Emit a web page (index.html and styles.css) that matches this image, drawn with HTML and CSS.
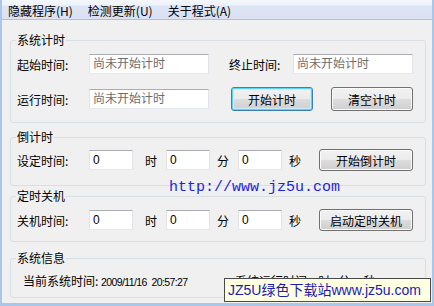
FILE: index.html
```html
<html lang="zh-CN">
<head>
    <meta charset="UTF-8">
    <title>计时器</title>
    <link rel="stylesheet" href="styles.css">
</head>
<body>
    <div class="window">
        <div class="menubar">
            <span class="menu-item">隐藏程序(H)</span><span class="menu-item">检测更新(U)</span><span class="menu-item">关于程式(A)</span>
        </div>

        <fieldset class="group g-clock">
            <legend>系统计时</legend>
            <div class="row">
                <span class="lbl">起始时间:</span>
                <input class="field wide" placeholder="尚未开始计时">
                <span class="lbl lbl-end">终止时间:</span>
                <input class="field wide" placeholder="尚未开始计时">
            </div>
            <div class="row row-next">
                <span class="lbl">运行时间:</span>
                <input class="field wide" placeholder="尚未开始计时">
                <button class="btn btn-start focused">开始计时</button>
                <button class="btn btn-clear">清空计时</button>
            </div>
        </fieldset>

        <fieldset class="group g-count">
            <legend>倒计时</legend>
            <div class="row row-short">
                <span class="lbl">设定时间:</span>
                <input class="field num" value="0">
                <span class="unit u-h">时</span>
                <input class="field num" value="0">
                <span class="unit">分</span>
                <input class="field num" value="0">
                <span class="unit">秒</span>
                <button class="btn btn-long">开始倒计时</button>
            </div>
        </fieldset>

        <fieldset class="group g-shut">
            <legend>定时关机</legend>
            <div class="row row-short">
                <span class="lbl">关机时间:</span>
                <input class="field num" value="0">
                <span class="unit u-h">时</span>
                <input class="field num" value="0">
                <span class="unit">分</span>
                <input class="field num" value="0">
                <span class="unit">秒</span>
                <button class="btn btn-long">启动定时关机</button>
            </div>
        </fieldset>

        <fieldset class="group g-info">
            <legend>系统信息</legend>
            <div class="info">
                <span class="info-now">当前系统时间: <span class="digits">2009/11/16&nbsp;&nbsp;20:57:27</span></span>
                <span class="info-run">系统运行时间: <span class="digits">3</span>时 <span class="digits">9</span>分 <span class="digits">21</span>秒</span>
            </div>
        </fieldset>

        <div class="watermark">http://www.jz5u.com</div>
        <div class="tooltip">JZ5U绿色下载站www.jz5u.com</div>
    </div>
</body>
</html>
```

FILE: styles.css
```css
body { margin: 0; font-family: "Noto Sans CJK SC", sans-serif; font-size: 12px; color: #000; }
.window { position: relative; width: 434px; height: 306px; box-sizing: border-box; background: #f0f0f0; border: 2px solid #aac6e8; border-top: none; border-bottom-width: 3px; overflow: hidden; }

/* menu */
.menubar { display: flex; height: 17px; padding-top: 2px; line-height: 17px; border-bottom: 1px solid #b3c0d8; background: linear-gradient(#f4f7fd 0, #eef2fa 25%, #dde4f4 35%, #d9e1f3 100%); }
.menu-item { padding: 0 7px 0 6px; margin-right: 2px; }

/* group boxes */
.group { width: 416px; box-sizing: border-box; margin: 0 0 0 8px; padding: 0 12px 0 6px; border: 1px solid #d5dfe5; border-radius: 3px; min-width: 0; }
.group legend { padding: 0 1px; margin-left: -1px; line-height: 14px; }
.g-clock { margin-top: 13px; padding-top: 5px; padding-bottom: 11px; }
.g-count { margin-top: 7px; padding-top: 5px; padding-bottom: 14px; }
.g-shut { margin-top: 3px; padding-top: 6px; padding-bottom: 10px; }
.g-info { margin-top: 9px; padding-top: 9px; padding-bottom: 9px; }

.row { display: flex; align-items: center; height: 24px; }
.row-next { margin-top: 11px; }
.row-short { height: 22px; }
.lbl { width: 72px; flex: none; }
.lbl-end { width: 64px; margin-left: 20px; }

.field { box-sizing: border-box; height: 20px; padding: 0 3px; margin: 0; font: 12px "Liberation Sans", "Noto Sans CJK SC", sans-serif; background: #fff; border: 1px solid #e2e3ea; border-top-color: #abadb3; border-bottom-color: #e3e9ef; outline: none; flex: none; }
.field::placeholder { color: #6d6d6d; font-family: "Noto Sans CJK SC", sans-serif; }
.wide { width: 120px; }
.num { width: 44px; }
.unit { width: 12px; margin: 0 9px 0 7px; flex: none; }
.unit.u-h { margin-left: 12px; }

.btn { box-sizing: border-box; height: 22px; margin: 0; padding: 0; font: 12px "Noto Sans CJK SC", sans-serif; color: #000; border: 1px solid #707070; border-radius: 3px; box-shadow: inset 0 0 0 1px #fbfbfb; background: linear-gradient(#f2f2f2 0, #ebebeb 50%, #dddddd 50%, #cfcfcf 100%); flex: none; }
.btn-start { width: 82px; height: 24px; margin-left: 22px; }
.btn-clear { width: 82px; height: 24px; margin-left: 18px; }
.btn-long { width: 94px; margin-left: 9px; }
.focused { border-color: #3c7fb1; box-shadow: inset 0 0 0 1px #5fd3f7, inset 0 0 0 2px #c8ecfa; }

/* info line */
.info { display: flex; line-height: 14px; padding-left: 6px; }
.info-now { width: 212px; }
.digits { font: 10.5px "Liberation Sans", sans-serif; letter-spacing: -0.6px; }

/* overlays */
.watermark { position: absolute; left: 167px; top: 180px; font: 15px/15px "Liberation Mono", monospace; color: #1f1fe8; }
.tooltip { position: absolute; left: 222px; top: 278px; width: 207px; height: 24px; box-sizing: border-box; padding-left: 3px; border: 1px solid #4a4a4a; background: #ffffe1; color: #1b1bb8; font: 14px/22px "Liberation Sans", "Noto Sans CJK SC", sans-serif; white-space: nowrap; }
```
